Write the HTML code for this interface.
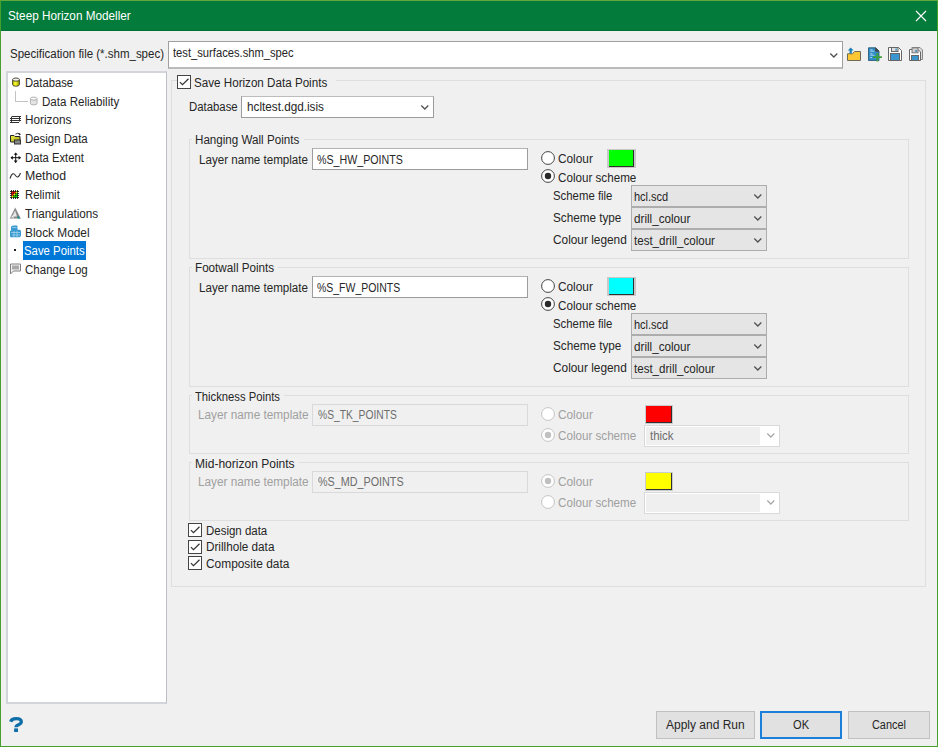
<!DOCTYPE html><html><head><meta charset="utf-8"><style>
*{margin:0;padding:0;box-sizing:border-box}
html,body{width:938px;height:747px;overflow:hidden;background:#f0f0f0;font-family:"Liberation Sans",sans-serif;color:#262626}
.t{position:absolute;font-size:12.3px;line-height:14px;white-space:nowrap;transform-origin:0 0}
.b{position:absolute}
.ab{position:absolute;overflow:visible}
.dis{color:#a0a0a0}
.grp{border:1px solid #dedede}
.cmb{background:#e5e5e5;border:1px solid #adadad}
.btn{background:#e1e1e1;border:1px solid #c0c0c0}
</style></head><body>
<div class="b " style="left:0px;top:0px;width:938px;height:747px;border:1px solid #45a02e;border-top-color:#62a83b"></div>
<div class="b " style="left:1px;top:1px;width:936px;height:30px;background:#037b3a"></div>
<div class="b " style="left:1px;top:30px;width:936px;height:1px;background:#03712f"></div>
<div id="title" class="t " style="left:8.20px;top:9px;transform:scaleX(0.9551);color:#fff">Steep Horizon Modeller</div>
<svg class="ab" style="left:915px;top:10px;" width="12" height="12" viewBox="0 0 12 12"><path d="M1 1L11 11M11 1L1 11" stroke="#fff" stroke-width="1.1"/></svg>
<div id="spec" class="t " style="left:10.00px;top:47px;transform:scaleX(0.9349);">Specification file (*.shm_spec)</div>
<div class="b " style="left:168px;top:41px;width:675px;height:28px;background:#fff;border:1px solid #a0a0a0;border-bottom:2px solid #bababa"></div>
<div id="specv" class="t " style="left:173.00px;top:46px;transform:scaleX(0.9098);">test_surfaces.shm_spec</div>
<svg class="ab" style="left:830px;top:53px;" width="8" height="5" viewBox="0 0 8 5"><path d="M0.3 0.5 L3.8 4 L7.3 0.5" fill="none" stroke="#505050" stroke-width="1.25"/></svg>
<svg class="ab" style="left:846px;top:47px;" width="16" height="15" viewBox="0 0 16 15"><path d="M1.5 6.8 H6.6 L8.6 4.5 H14.5 V13.5 H1.5 Z" fill="#fcc733" stroke="#6f6a55" stroke-width="1"/><path d="M4.7 0.6 L7.6 3.6 H5.8 V6.4 H3.6 V3.6 H1.8 Z" fill="#1a7fb8"/></svg>
<svg class="ab" style="left:868px;top:47px;" width="15" height="16" viewBox="0 0 15 16"><path d="M0.5 0.8 H7.8 L11 4 V13.5 H0.5 Z" fill="#2f8cc8" stroke="#2c5a78" stroke-width="0.9"/><path d="M7.6 0.8 V4.2 H11" fill="#4a4a4a" stroke="#444" stroke-width="0.9"/><path d="M2.2 2.8 H4.5 M2.2 4.2 H6.5 M2.2 6.8 H4.5 M2.2 8.2 H6.5 M2.2 10.5 H4" stroke="#b8dcf0" stroke-width="0.9"/><path d="M5 10.2 H13.9 M9.4 6 V14.6" stroke="#3ca03c" stroke-width="1.8"/></svg>
<svg class="ab" style="left:888px;top:47px;" width="15" height="15" viewBox="0 0 15 15"><path d="M0.5 0.5 H10.5 L13.5 3.5 V13.5 H0.5 Z" fill="#fff" stroke="#666" stroke-width="1"/><rect x="3.5" y="0.5" width="6.5" height="4" fill="#ddd" stroke="#666"/><rect x="7.5" y="1.5" width="1.2" height="2.2" fill="#1a7fb8"/><rect x="2.5" y="6.5" width="9" height="7" fill="#3b96cf" stroke="#666"/></svg>
<svg class="ab" style="left:909px;top:47px;" width="15" height="15" viewBox="0 0 15 15"><path d="M3.5 0.5 H11 L13.5 3 V12.5 H3.5 Z" fill="#ddd" stroke="#888" stroke-width="1"/><path d="M0.5 2.5 H9 L11.5 5 V13.5 H0.5 Z" fill="#fff" stroke="#666" stroke-width="1"/><rect x="3" y="0.8" width="6" height="5" fill="#ccc" stroke="#777"/><rect x="6.5" y="3" width="1.2" height="2" fill="#1a7fb8"/><rect x="2.5" y="8.5" width="7" height="5" fill="#3b96cf" stroke="#666"/></svg>
<div class="b " style="left:6px;top:71px;width:161px;height:633px;background:#fff;border:2px solid #d2d5d9;border-right:1px solid #bcc0c6"></div>
<div id="tr0" class="t " style="left:24.50px;top:76px;transform:scaleX(0.9120);">Database</div>
<div id="tr1" class="t " style="left:42.20px;top:95px;transform:scaleX(0.9414);">Data Reliability</div>
<div id="tr2" class="t " style="left:24.50px;top:113px;transform:scaleX(0.9545);">Horizons</div>
<div id="tr3" class="t " style="left:24.50px;top:132px;transform:scaleX(0.9267);">Design Data</div>
<div id="tr4" class="t " style="left:24.50px;top:151px;transform:scaleX(0.9155);">Data Extent</div>
<div id="tr5" class="t " style="left:24.50px;top:169px;transform:scaleX(1.0006);">Method</div>
<div id="tr6" class="t " style="left:24.50px;top:188px;transform:scaleX(0.9266);">Relimit</div>
<div id="tr7" class="t " style="left:24.50px;top:207px;transform:scaleX(0.9534);">Triangulations</div>
<div id="tr8" class="t " style="left:24.50px;top:226px;transform:scaleX(0.9639);">Block Model</div>
<div class="b " style="left:23px;top:241px;width:63px;height:19px;background:#0078d7"></div>
<div id="tr9" class="t " style="left:23.50px;top:244px;transform:scaleX(0.9245);color:#fff">Save Points</div>
<div id="tr10" class="t " style="left:24.50px;top:263px;transform:scaleX(0.9365);">Change Log</div>
<svg class="ab" style="left:11px;top:77px;" width="10" height="11" viewBox="0 0 10 11"><defs><linearGradient id="gy" x1="0" x2="1"><stop offset="0" stop-color="#b8b800"/><stop offset="0.45" stop-color="#ffff30"/><stop offset="1" stop-color="#909000"/></linearGradient></defs><path d="M1.6 2.6 V7.6 A3.4 1.6 0 0 0 8.4 7.6 V2.6" fill="url(#gy)" stroke="#3a3a2a" stroke-width="0.9"/><ellipse cx="5" cy="2.6" rx="3.4" ry="1.6" fill="#f4f4f4" stroke="#3a3a2a" stroke-width="0.9"/></svg>
<div class="b " style="left:15px;top:91px;width:1px;height:11px;background:#c4c4c4"></div>
<div class="b " style="left:15px;top:101px;width:13px;height:1px;background:#c4c4c4"></div>
<svg class="ab" style="left:29px;top:96px;" width="10" height="10" viewBox="0 0 10 10"><path d="M1.4 2.6 V7.4 A3.3 1.5 0 0 0 8 7.4 V2.6" fill="#e4e4e4" stroke="#a8a8a8" stroke-width="0.9"/><ellipse cx="4.7" cy="2.6" rx="3.3" ry="1.5" fill="#fafafa" stroke="#a8a8a8" stroke-width="0.9"/></svg>
<svg class="ab" style="left:9px;top:115px;" width="13" height="9" viewBox="0 0 13 9"><path d="M3 1.5 H12 M1 3.5 H12 M1 5.5 H12 M1 7.5 H10 M2.5 1.5 V7.5 M10.5 1.5 V6.5" stroke="#333" stroke-width="1" fill="none"/></svg>
<svg class="ab" style="left:9px;top:132px;" width="13" height="13" viewBox="0 0 13 13"><defs><linearGradient id="gf" x1="0" y1="0" x2="1" y2="1"><stop offset="0" stop-color="#f4f450"/><stop offset="1" stop-color="#9a9a10"/></linearGradient></defs><path d="M1.5 3.5 H5 L6 4.5 H11 V10 H1.5 Z" fill="url(#gf)" stroke="#222" stroke-width="1"/><rect x="5.5" y="8" width="6" height="4" fill="#888" stroke="#333"/><path d="M6.5 2.2 Q8.5 0.6 10.5 1.8" stroke="#333" fill="none"/><path d="M9.6 0.8 L12 2.2 L10 3.6 Z" fill="#222"/></svg>
<svg class="ab" style="left:10px;top:152px;" width="12" height="12" viewBox="0 0 12 12"><path d="M5.7 1 V10.5 M1 5.7 H10.5" stroke="#111" stroke-width="1"/><path d="M5.7 0.5 L3.7 2.8 H7.7 Z M5.7 11 L3.7 8.6 H7.7 Z M0.5 5.7 L2.8 3.7 V7.7 Z M11 5.7 L8.6 3.7 V7.7 Z" fill="#111"/></svg>
<svg class="ab" style="left:9px;top:172px;" width="13" height="8" viewBox="0 0 13 8"><path d="M1 6.5 C3 0.5 5 1 6.5 3.5 C8 6 10 5.5 11.5 1" fill="none" stroke="#333" stroke-width="1.1"/></svg>
<svg class="ab" style="left:10px;top:190px;" width="9" height="9" viewBox="0 0 9 9"><path d="M1.5 0 V9 M3.5 0 V9 M5.5 0 V9 M7.5 0 V9 M0 1.5 H9 M0 3.5 H9 M0 5.5 H9 M0 7.5 H9" stroke="#000" stroke-width="0.8"/><circle cx="2.5" cy="2.5" r="0.95" fill="#f00"/><circle cx="4.5" cy="2.5" r="0.95" fill="#f00"/><circle cx="6.5" cy="2.5" r="0.95" fill="#ee0"/><circle cx="2.5" cy="4.5" r="0.95" fill="#f00"/><circle cx="4.5" cy="4.5" r="0.95" fill="#ee0"/><circle cx="6.5" cy="4.5" r="0.95" fill="#0d0"/><circle cx="2.5" cy="6.5" r="0.95" fill="#ee0"/><circle cx="4.5" cy="6.5" r="0.95" fill="#0d0"/><circle cx="6.5" cy="6.5" r="0.95" fill="#0d0"/></svg>
<svg class="ab" style="left:9px;top:206px;" width="13" height="13" viewBox="0 0 13 13"><path d="M6.2 1.5 L11.8 12.5 H0.8 Z" fill="#8a8a8a"/><path d="M6 4.5 L3.5 10.5 H8 Z" fill="#e8e8e8"/><path d="M2 11.5 L4 9 L5 11.5 Z" fill="#f4f4f4"/><path d="M8.5 9.5 L11.5 12.5 H8.5 Z" fill="#138a8a"/></svg>
<svg class="ab" style="left:9px;top:225px;" width="13" height="13" viewBox="0 0 13 13"><path d="M2 1.5 L4 0.5 H8 L8.5 1.5 V5 H2 Z" fill="#3a9ad0"/><path d="M1 6 L3 4.8 H11 L12 6 V11 L10.5 12.3 H1.5 L1 11 Z" fill="#3a9ad0"/><path d="M3 2.5 H7.5 M2 7.5 H11 M3 10 H11 M5 6 V12 M8 6 V12" stroke="#9fd3ee" stroke-width="0.8"/></svg>
<div class="b " style="left:14px;top:249px;width:2px;height:2px;background:#222"></div>
<svg class="ab" style="left:9px;top:263px;" width="13" height="12" viewBox="0 0 13 12"><path d="M1.5 1 H11.5 V8 H4.5 L1.5 11 Z" fill="#f4f4f4" stroke="#808080" stroke-width="1"/><rect x="3" y="2.5" width="7" height="4" fill="#a8a8a8"/></svg>
<div class="b grp" style="left:171px;top:80px;width:755px;height:507px;"></div>
<svg class="ab" style="left:177px;top:75px;" width="14" height="14" viewBox="0 0 14 14"><rect x="0.5" y="0.5" width="13" height="13" fill="#fff" stroke="#444"/><path d="M2.9 7.1 L5.5 9.6 L11.5 3.8" fill="none" stroke="#333" stroke-width="1.25"/></svg>
<div class="b " style="left:192px;top:76px;width:144px;height:13px;background:#f0f0f0"></div>
<div id="shdp" class="t " style="left:194.00px;top:76px;transform:scaleX(0.9462);">Save Horizon Data Points</div>
<div id="db" class="t " style="left:188.70px;top:100px;transform:scaleX(0.9248);">Database</div>
<div class="b " style="left:241px;top:96px;width:193px;height:22px;background:#fff;border:1px solid #9c9c9c;border-top-color:#bcbcbc"></div>
<div id="dbv" class="t " style="left:246.50px;top:100px;transform:scaleX(0.9538);">hcltest.dgd.isis</div>
<svg class="ab" style="left:421px;top:105px;" width="8" height="5" viewBox="0 0 8 5"><path d="M0.3 0.5 L3.8 4 L7.3 0.5" fill="none" stroke="#505050" stroke-width="1.25"/></svg>
<div class="b grp" style="left:189px;top:139px;width:720px;height:120px;"></div>
<div class="b " style="left:192px;top:138px;width:111.69999999999999px;height:4px;background:#f0f0f0"></div>
<div id="hwg" class="t " style="left:195.40px;top:133px;transform:scaleX(0.9451);">Hanging Wall Points</div>
<div id="hwl" class="t " style="left:198.60px;top:153px;transform:scaleX(0.9435);">Layer name template</div>
<div class="b " style="left:312px;top:148px;width:216px;height:22px;background:#fff;border:1px solid #9c9c9c;border-top-color:#b4b4b4"></div>
<div id="hwv" class="t " style="left:317.10px;top:153px;transform:scaleX(0.8668);">%S_HW_POINTS</div>
<svg class="ab" style="left:541px;top:151px;" width="14" height="14" viewBox="0 0 14 14"><circle cx="7" cy="7" r="6.4" fill="#fff" stroke="#444" stroke-width="1"/></svg>
<div id="hwc1" class="t " style="left:558.30px;top:152px;transform:scaleX(0.9616);">Colour</div>
<div class="b " style="left:607px;top:149px;width:29px;height:19px;background:#c8c8c8"></div>
<div class="b " style="left:609px;top:150px;width:25px;height:17px;background:#00ff00;box-shadow:inset -1px -1px 0 #303030"></div>
<svg class="ab" style="left:541px;top:169px;" width="14" height="14" viewBox="0 0 14 14"><circle cx="7" cy="7" r="6.4" fill="#fff" stroke="#444" stroke-width="1"/><circle cx="7" cy="7" r="3.2" fill="#2a2a2a"/></svg>
<div id="hwc2" class="t " style="left:558.30px;top:171px;transform:scaleX(0.9470);">Colour scheme</div>
<div id="hws0" class="t " style="left:553.10px;top:189px;transform:scaleX(0.9252);">Scheme file</div>
<div class="b cmb" style="left:631px;top:185px;width:136px;height:22px;"></div>
<div id="hwsv0" class="t " style="left:634.00px;top:190px;transform:scaleX(0.8947);">hcl.scd</div>
<svg class="ab" style="left:754px;top:194px;" width="8" height="5" viewBox="0 0 8 5"><path d="M0.3 0.5 L3.8 4 L7.3 0.5" fill="none" stroke="#505050" stroke-width="1.25"/></svg>
<div id="hws1" class="t " style="left:553.10px;top:211px;transform:scaleX(0.9523);">Scheme type</div>
<div class="b cmb" style="left:631px;top:207px;width:136px;height:22px;"></div>
<div id="hwsv1" class="t " style="left:634.00px;top:212px;transform:scaleX(0.9500);">drill_colour</div>
<svg class="ab" style="left:754px;top:216px;" width="8" height="5" viewBox="0 0 8 5"><path d="M0.3 0.5 L3.8 4 L7.3 0.5" fill="none" stroke="#505050" stroke-width="1.25"/></svg>
<div id="hws2" class="t " style="left:553.10px;top:233px;transform:scaleX(0.9638);">Colour legend</div>
<div class="b cmb" style="left:631px;top:229px;width:136px;height:22px;"></div>
<div id="hwsv2" class="t " style="left:634.00px;top:234px;transform:scaleX(0.9396);">test_drill_colour</div>
<svg class="ab" style="left:754px;top:238px;" width="8" height="5" viewBox="0 0 8 5"><path d="M0.3 0.5 L3.8 4 L7.3 0.5" fill="none" stroke="#505050" stroke-width="1.25"/></svg>
<div class="b grp" style="left:189px;top:267px;width:720px;height:120px;"></div>
<div class="b " style="left:192px;top:266px;width:86px;height:4px;background:#f0f0f0"></div>
<div id="fwg" class="t " style="left:195.40px;top:261px;transform:scaleX(0.9494);">Footwall Points</div>
<div id="fwl" class="t " style="left:198.60px;top:281px;transform:scaleX(0.9435);">Layer name template</div>
<div class="b " style="left:312px;top:276px;width:216px;height:22px;background:#fff;border:1px solid #9c9c9c;border-top-color:#b4b4b4"></div>
<div id="fwv" class="t " style="left:317.10px;top:281px;transform:scaleX(0.8511);">%S_FW_POINTS</div>
<svg class="ab" style="left:541px;top:279px;" width="14" height="14" viewBox="0 0 14 14"><circle cx="7" cy="7" r="6.4" fill="#fff" stroke="#444" stroke-width="1"/></svg>
<div id="fwc1" class="t " style="left:558.30px;top:280px;transform:scaleX(0.9616);">Colour</div>
<div class="b " style="left:607px;top:277px;width:29px;height:19px;background:#c8c8c8"></div>
<div class="b " style="left:609px;top:278px;width:25px;height:17px;background:#00ffff;box-shadow:inset -1px -1px 0 #303030"></div>
<svg class="ab" style="left:541px;top:297px;" width="14" height="14" viewBox="0 0 14 14"><circle cx="7" cy="7" r="6.4" fill="#fff" stroke="#444" stroke-width="1"/><circle cx="7" cy="7" r="3.2" fill="#2a2a2a"/></svg>
<div id="fwc2" class="t " style="left:558.30px;top:299px;transform:scaleX(0.9470);">Colour scheme</div>
<div id="fws0" class="t " style="left:553.10px;top:317px;transform:scaleX(0.9252);">Scheme file</div>
<div class="b cmb" style="left:631px;top:313px;width:136px;height:22px;"></div>
<div id="fwsv0" class="t " style="left:634.00px;top:318px;transform:scaleX(0.8947);">hcl.scd</div>
<svg class="ab" style="left:754px;top:322px;" width="8" height="5" viewBox="0 0 8 5"><path d="M0.3 0.5 L3.8 4 L7.3 0.5" fill="none" stroke="#505050" stroke-width="1.25"/></svg>
<div id="fws1" class="t " style="left:553.10px;top:339px;transform:scaleX(0.9523);">Scheme type</div>
<div class="b cmb" style="left:631px;top:335px;width:136px;height:22px;"></div>
<div id="fwsv1" class="t " style="left:634.00px;top:340px;transform:scaleX(0.9500);">drill_colour</div>
<svg class="ab" style="left:754px;top:344px;" width="8" height="5" viewBox="0 0 8 5"><path d="M0.3 0.5 L3.8 4 L7.3 0.5" fill="none" stroke="#505050" stroke-width="1.25"/></svg>
<div id="fws2" class="t " style="left:553.10px;top:361px;transform:scaleX(0.9638);">Colour legend</div>
<div class="b cmb" style="left:631px;top:357px;width:136px;height:22px;"></div>
<div id="fwsv2" class="t " style="left:634.00px;top:362px;transform:scaleX(0.9396);">test_drill_colour</div>
<svg class="ab" style="left:754px;top:366px;" width="8" height="5" viewBox="0 0 8 5"><path d="M0.3 0.5 L3.8 4 L7.3 0.5" fill="none" stroke="#505050" stroke-width="1.25"/></svg>
<div class="b grp" style="left:189px;top:395px;width:720px;height:59px;"></div>
<div class="b " style="left:192px;top:394px;width:91.69999999999999px;height:4px;background:#f0f0f0"></div>
<div id="tkg" class="t " style="left:195.40px;top:390px;transform:scaleX(0.9140);">Thickness Points</div>
<div id="tkl" class="t dis" style="left:197.60px;top:408px;transform:scaleX(0.9578);">Layer name template</div>
<div class="b " style="left:312px;top:404px;width:216px;height:22px;background:#f0f0f0;border:1px solid #d9d9d9"></div>
<div id="tkv" class="t " style="left:317.50px;top:408px;transform:scaleX(0.8363);color:#6d6d6d">%S_TK_POINTS</div>
<svg class="ab" style="left:541px;top:407px;" width="14" height="14" viewBox="0 0 14 14"><circle cx="7" cy="7" r="6.4" fill="#fff" stroke="#c4c4c4" stroke-width="1"/></svg>
<div id="tkc1" class="t dis" style="left:558.30px;top:408px;transform:scaleX(0.9616);">Colour</div>
<div class="b " style="left:645px;top:405px;width:28px;height:19px;background:#c8cccc"></div>
<div class="b " style="left:646px;top:406px;width:26px;height:17px;background:#ff0000;box-shadow:inset -1px -1px 0 #303030"></div>
<svg class="ab" style="left:541px;top:428px;" width="14" height="14" viewBox="0 0 14 14"><circle cx="7" cy="7" r="6.4" fill="#fff" stroke="#c4c4c4" stroke-width="1"/><circle cx="7" cy="7" r="3.2" fill="#c0c0c0"/></svg>
<div id="tkc2" class="t dis" style="left:558.30px;top:429px;transform:scaleX(0.9463);">Colour scheme</div>
<div class="b " style="left:644px;top:425px;width:136px;height:22px;background:#fff;border:1px solid #d9d9d9"><div style="position:absolute;left:1px;top:1px;width:114px;height:18px;background:#efefef"></div></div>
<div id="tkcv" class="t " style="left:649.80px;top:429px;transform:scaleX(0.9315);color:#6d6d6d">thick</div>
<svg class="ab" style="left:767px;top:433px;" width="8" height="5" viewBox="0 0 8 5"><path d="M0.3 0.5 L3.8 4 L7.3 0.5" fill="none" stroke="#a8a8a8" stroke-width="1.25"/></svg>
<div class="b grp" style="left:189px;top:462px;width:720px;height:59px;"></div>
<div class="b " style="left:192px;top:461px;width:107px;height:4px;background:#f0f0f0"></div>
<div id="mdg" class="t " style="left:195.40px;top:457px;transform:scaleX(0.9783);">Mid-horizon Points</div>
<div id="mdl" class="t dis" style="left:197.60px;top:475px;transform:scaleX(0.9578);">Layer name template</div>
<div class="b " style="left:312px;top:471px;width:216px;height:22px;background:#f0f0f0;border:1px solid #d9d9d9"></div>
<div id="mdv" class="t " style="left:317.50px;top:475px;transform:scaleX(0.8763);color:#6d6d6d">%S_MD_POINTS</div>
<svg class="ab" style="left:541px;top:474px;" width="14" height="14" viewBox="0 0 14 14"><circle cx="7" cy="7" r="6.4" fill="#fff" stroke="#c4c4c4" stroke-width="1"/><circle cx="7" cy="7" r="3.2" fill="#c0c0c0"/></svg>
<div id="mdc1" class="t dis" style="left:558.30px;top:475px;transform:scaleX(0.9616);">Colour</div>
<div class="b " style="left:645px;top:472px;width:28px;height:19px;background:#c8cccc"></div>
<div class="b " style="left:646px;top:473px;width:26px;height:17px;background:#ffff00;box-shadow:inset -1px -1px 0 #303030"></div>
<svg class="ab" style="left:541px;top:495px;" width="14" height="14" viewBox="0 0 14 14"><circle cx="7" cy="7" r="6.4" fill="#fff" stroke="#c4c4c4" stroke-width="1"/></svg>
<div id="mdc2" class="t dis" style="left:558.30px;top:496px;transform:scaleX(0.9463);">Colour scheme</div>
<div class="b " style="left:644px;top:492px;width:136px;height:22px;background:#fff;border:1px solid #d9d9d9"><div style="position:absolute;left:1px;top:1px;width:114px;height:18px;background:#efefef"></div></div>
<svg class="ab" style="left:767px;top:500px;" width="8" height="5" viewBox="0 0 8 5"><path d="M0.3 0.5 L3.8 4 L7.3 0.5" fill="none" stroke="#a8a8a8" stroke-width="1.25"/></svg>
<svg class="ab" style="left:188px;top:523px;" width="14" height="14" viewBox="0 0 14 14"><rect x="0.5" y="0.5" width="13" height="13" fill="#fff" stroke="#444"/><path d="M2.9 7.1 L5.5 9.6 L11.5 3.8" fill="none" stroke="#333" stroke-width="1.25"/></svg>
<div id="ck0" class="t " style="left:205.70px;top:524px;transform:scaleX(0.9334);">Design data</div>
<svg class="ab" style="left:188px;top:540px;" width="14" height="14" viewBox="0 0 14 14"><rect x="0.5" y="0.5" width="13" height="13" fill="#fff" stroke="#444"/><path d="M2.9 7.1 L5.5 9.6 L11.5 3.8" fill="none" stroke="#333" stroke-width="1.25"/></svg>
<div id="ck1" class="t " style="left:205.70px;top:540px;transform:scaleX(0.9530);">Drillhole data</div>
<svg class="ab" style="left:188px;top:556px;" width="14" height="14" viewBox="0 0 14 14"><rect x="0.5" y="0.5" width="13" height="13" fill="#fff" stroke="#444"/><path d="M2.9 7.1 L5.5 9.6 L11.5 3.8" fill="none" stroke="#333" stroke-width="1.25"/></svg>
<div id="ck2" class="t " style="left:205.70px;top:557px;transform:scaleX(0.9678);">Composite data</div>
<div class="b btn" style="left:656px;top:711px;width:99px;height:28px;"></div>
<div id="b1" class="t " style="left:666.00px;top:718px;transform:scaleX(0.9750);">Apply and Run</div>
<div class="b " style="left:760px;top:711px;width:82px;height:28px;background:#e1e1e1;border:2px solid #1a80d9"></div>
<div id="b2" class="t " style="left:792.70px;top:718px;transform:scaleX(0.9026);">OK</div>
<div class="b btn" style="left:848px;top:711px;width:82px;height:28px;"></div>
<div id="b3" class="t " style="left:871.60px;top:718px;transform:scaleX(0.8847);">Cancel</div>
<svg class="ab" style="left:4px;top:712px;" width="24" height="24" viewBox="0 0 24 24"><path d="M6.7 9.7 Q7.6 6.7 12.1 6.7 Q17.3 6.7 17.3 9.8 Q17.3 11.6 14.6 12.7 Q12 13.7 12 15.2" fill="none" stroke="#0d6ea8" stroke-width="3.3"/><rect x="10.1" y="16.4" width="3.9" height="3.6" fill="#0d6ea8"/></svg>
</body></html>
